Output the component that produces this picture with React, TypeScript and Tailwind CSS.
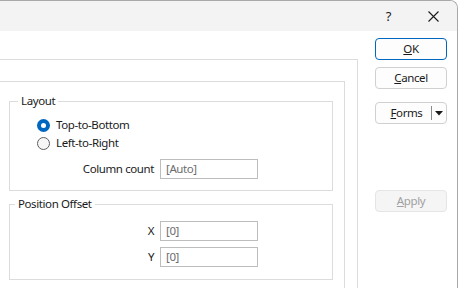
import React from 'react'

function Radio({ checked, label }: { checked?: boolean; label: string }) {
  return (
    <div className="flex h-[18px] items-center gap-[6px]">
      {checked ? (
        <span className="flex h-[13px] w-[13px] items-center justify-center rounded-full bg-[#0067c0]">
          <span className="h-[5px] w-[5px] rounded-full bg-white" />
        </span>
      ) : (
        <span className="h-[13px] w-[13px] rounded-full border border-[#5f5f5f] bg-[#f6f6f6]" />
      )}
      <span>{label}</span>
    </div>
  )
}

function Field({ label, value }: { label: string; value: string }) {
  return (
    <div className="flex items-center">
      <div className="w-[144px] text-right">{label}</div>
      <div className="ml-[6px] flex h-[20px] w-[98px] items-center border border-[#bdbdbd] bg-white pl-[5px] text-[#6d6d6d]">
        {value}
      </div>
    </div>
  )
}

function Btn({ children, primary, disabled }: { children: React.ReactNode; primary?: boolean; disabled?: boolean }) {
  return (
    <div
      className={
        'flex h-[22px] w-[72px] items-center justify-center rounded-[4px] border ' +
        (primary
          ? 'border-[#0067c0] bg-[#fdfdfd]'
          : disabled
            ? 'border-[#e5e5e5] bg-[#f5f5f5] text-[#a0a0a0]'
            : 'border-[#d0d0d0] bg-[#fdfdfd]')
      }
    >
      {children}
    </div>
  )
}

export default function App() {
  return (
    <div
      className="relative h-[288px] w-[458px] overflow-hidden rounded-tr-[8px] border-t border-r border-[#a8a8a8] bg-white text-[11.5px] leading-[16px] tracking-[-0.4px] text-[#1a1a1a]"
      style={{ fontFamily: '"Noto Sans", "Open Sans", sans-serif' }}
    >
      <div className="flex h-[30px] items-center justify-end bg-[#f3f3f3]">
        <span className="mr-[37px] text-[13px]">?</span>
        <svg width="11" height="11" viewBox="0 0 11 11" className="mr-[18px]">
          <path d="M0.5 0.5 L10.5 10.5 M10.5 0.5 L0.5 10.5" stroke="#1a1a1a" strokeWidth="1.1" />
        </svg>
      </div>

      <div className="flex">
        <div className="w-[361px] pt-[28px]">
          <div className="h-[250px] w-[358px] border-t border-r border-[#dcdcdc]">
            <div className="mt-[21px] h-[220px] w-[345px] border-t border-r border-[#dcdcdc]">
              <fieldset className="mt-[11px] ml-[9px] w-[324px] border border-[#dcdcdc] pb-[11px]">
                <legend className="ml-[8px] px-[3px]">Layout</legend>
                <div className="pt-[7px] pl-[27px]">
                  <Radio checked label="Top-to-Bottom" />
                  <Radio label="Left-to-Right" />
                </div>
                <div className="mt-[7px]">
                  <Field label="Column count" value="[Auto]" />
                </div>
              </fieldset>

              <fieldset className="mt-[5px] ml-[9px] w-[324px] border border-[#dcdcdc] pb-[12px]">
                <legend className="ml-[5px] px-[3px]">Position Offset</legend>
                <div className="flex flex-col gap-[6px] pt-[9px]">
                  <Field label="X" value="[0]" />
                  <Field label="Y" value="[0]" />
                </div>
              </fieldset>
            </div>
          </div>
        </div>

        <div className="flex flex-col pt-[7px] pl-[14px]">
          <Btn primary>
            <span>
              <span className="underline">O</span>K
            </span>
          </Btn>
          <div className="mt-[7px]">
            <Btn>
              <span>
                <span className="underline">C</span>ancel
              </span>
            </Btn>
          </div>
          <div className="mt-[13px]">
            <div className="flex h-[22px] w-[72px] items-center rounded-[4px] border border-[#d0d0d0] bg-[#fdfdfd]">
              <span className="flex-1 pl-[6px] text-center">
                <span className="underline">F</span>orms
              </span>
              <span className="h-[14px] w-px bg-[#8a8a8a]" />
              <span className="flex w-[14px] justify-center">
                <svg width="8" height="5" viewBox="0 0 8 5">
                  <path d="M0 0 H8 L4 4.5 Z" fill="#1a1a1a" />
                </svg>
              </span>
            </div>
          </div>
          <div className="mt-[66px]">
            <Btn disabled>
              <span>
                <span className="underline">A</span>pply
              </span>
            </Btn>
          </div>
        </div>
      </div>
    </div>
  )
}
